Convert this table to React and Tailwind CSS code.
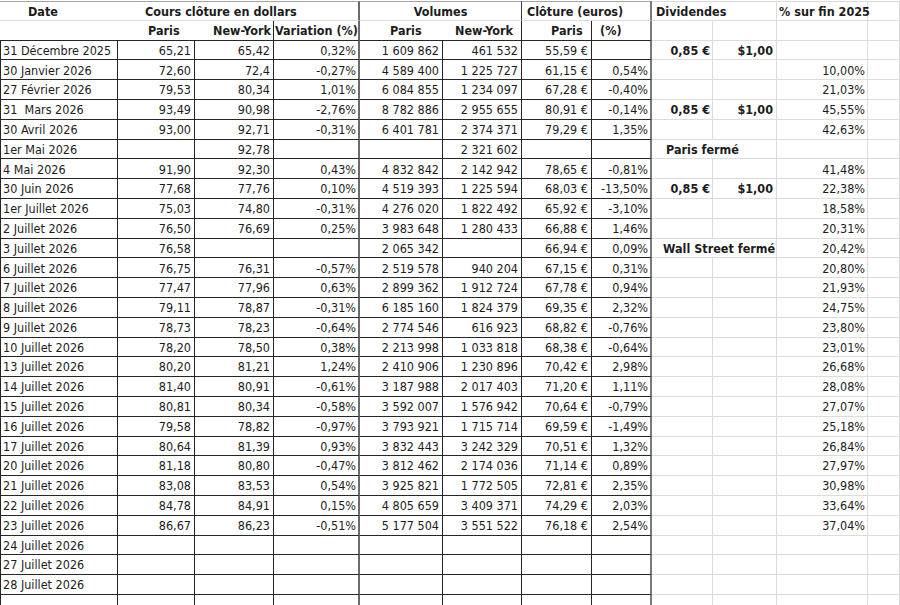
const cols =
  "grid grid-cols-[118px_77px_79px_86px_83px_79px_70px_60px_61px_64px_91px_32px]";

// border + alignment for each column of the data rows
const cellCls = [
  "border-l border-r border-b border-[#262626] justify-start pl-[2px]",
  "border-r border-b border-[#262626] justify-end pr-[3px]",
  "border-r border-b border-[#262626] justify-end pr-[3px]",
  "border-r-2 border-b border-b-[#262626] border-r-[#6b6b6b] justify-end pr-[2px]",
  "border-r border-b border-[#262626] justify-end pr-[3px]",
  "border-r border-b border-[#262626] justify-end pr-[3px]",
  "border-r border-b border-[#262626] justify-end pr-[3px]",
  "border-r-2 border-b border-b-[#262626] border-r-[#7a7a7a] justify-end pr-[2px]",
  "border-r border-b border-[#dcdcdc] justify-end pr-[2px] font-bold",
  "border-r border-b border-[#dcdcdc] justify-end pr-[3px] font-bold",
  "border-r border-b border-[#dcdcdc] justify-end pr-[2px]",
  "border-r border-b border-[#dcdcdc]",
];

const rows = [
  ["31 Décembre 2025", "65,21", "65,42", "0,32%", "1 609 862", "461 532", "55,59 €", "", "0,85 €", "$1,00", ""],
  ["30 Janvier 2026", "72,60", "72,4", "-0,27%", "4 589 400", "1 225 727", "61,15 €", "0,54%", "", "", "10,00%"],
  ["27 Février 2026", "79,53", "80,34", "1,01%", "6 084 855", "1 234 097", "67,28 €", "-0,40%", "", "", "21,03%"],
  ["31  Mars 2026", "93,49", "90,98", "-2,76%", "8 782 886", "2 955 655", "80,91 €", "-0,14%", "0,85 €", "$1,00", "45,55%"],
  ["30 Avril 2026", "93,00", "92,71", "-0,31%", "6 401 781", "2 374 371", "79,29 €", "1,35%", "", "", "42,63%"],
  ["1er Mai 2026", "", "92,78", "", "", "2 321 602", "", "", "Paris fermé", null, ""],
  ["4 Mai 2026", "91,90", "92,30", "0,43%", "4 832 842", "2 142 942", "78,65 €", "-0,81%", "", "", "41,48%"],
  ["30 Juin 2026", "77,68", "77,76", "0,10%", "4 519 393", "1 225 594", "68,03 €", "-13,50%", "0,85 €", "$1,00", "22,38%"],
  ["1er Juillet 2026", "75,03", "74,80", "-0,31%", "4 276 020", "1 822 492", "65,92 €", "-3,10%", "", "", "18,58%"],
  ["2 Juillet 2026", "76,50", "76,69", "0,25%", "3 983 648", "1 280 433", "66,88 €", "1,46%", "", "", "20,31%"],
  ["3 Juillet 2026", "76,58", "", "", "2 065 342", "", "66,94 €", "0,09%", "Wall Street fermé", null, "20,42%"],
  ["6 Juillet 2026", "76,75", "76,31", "-0,57%", "2 519 578", "940 204", "67,15 €", "0,31%", "", "", "20,80%"],
  ["7 Juillet 2026", "77,47", "77,96", "0,63%", "2 899 362", "1 912 724", "67,78 €", "0,94%", "", "", "21,93%"],
  ["8 Juillet 2026", "79,11", "78,87", "-0,31%", "6 185 160", "1 824 379", "69,35 €", "2,32%", "", "", "24,75%"],
  ["9 Juillet 2026", "78,73", "78,23", "-0,64%", "2 774 546", "616 923", "68,82 €", "-0,76%", "", "", "23,80%"],
  ["10 Juillet 2026", "78,20", "78,50", "0,38%", "2 213 998", "1 033 818", "68,38 €", "-0,64%", "", "", "23,01%"],
  ["13 Juillet 2026", "80,20", "81,21", "1,24%", "2 410 906", "1 230 896", "70,42 €", "2,98%", "", "", "26,68%"],
  ["14 Juillet 2026", "81,40", "80,91", "-0,61%", "3 187 988", "2 017 403", "71,20 €", "1,11%", "", "", "28,08%"],
  ["15 Juillet 2026", "80,81", "80,34", "-0,58%", "3 592 007", "1 576 942", "70,64 €", "-0,79%", "", "", "27,07%"],
  ["16 Juillet 2026", "79,58", "78,82", "-0,97%", "3 793 921", "1 715 714", "69,59 €", "-1,49%", "", "", "25,18%"],
  ["17 Juillet 2026", "80,64", "81,39", "0,93%", "3 832 443", "3 242 329", "70,51 €", "1,32%", "", "", "26,84%"],
  ["20 Juillet 2026", "81,18", "80,80", "-0,47%", "3 812 462", "2 174 036", "71,14 €", "0,89%", "", "", "27,97%"],
  ["21 Juillet 2026", "83,08", "83,53", "0,54%", "3 925 821", "1 772 505", "72,81 €", "2,35%", "", "", "30,98%"],
  ["22 Juillet 2026", "84,78", "84,91", "0,15%", "4 805 659", "3 409 371", "74,29 €", "2,03%", "", "", "33,64%"],
  ["23 Juillet 2026", "86,67", "86,23", "-0,51%", "5 177 504", "3 551 522", "76,18 €", "2,54%", "", "", "37,04%"],
  ["24 Juillet 2026", "", "", "", "", "", "", "", "", "", ""],
  ["27 Juillet 2026", "", "", "", "", "", "", "", "", "", ""],
  ["28 Juillet 2026", "", "", "", "", "", "", "", "", "", ""],
  ["", "", "", "", "", "", "", "", "", "", ""],
];

const Row = ({ data }) => (
  <div className={`${cols} h-[19.8px]`}>
    {[...data, ""].map((v, i) => {
      if (v === null) return null;
      // closed-market notes spill over the next column
      if (i === 8 && data[9] === null) {
        return (
          <div
            key={i}
            className={`col-span-2 flex items-center pt-[2px] whitespace-nowrap font-bold border-r border-b border-[#dcdcdc] ${
              v === "Paris fermé" ? "pl-[14px]" : "pl-[11px]"
            }`}
          >
            {v}
          </div>
        );
      }
      return (
        <div key={i} className={`flex items-center pt-[2px] whitespace-pre overflow-visible ${cellCls[i]}`}>
          {v}
        </div>
      );
    })}
  </div>
);

export default function App() {
  return (
    <div className="w-[900px] h-[605px] overflow-hidden bg-white pt-[1px] text-[12.5px] leading-none text-[#1c1c1c] font-['Liberation_Sans_Narrow','DejaVu_Sans_Condensed','Roboto_Condensed',Roboto,sans-serif]">
      {/* group headings */}
      <div className={`${cols} h-[19.8px] font-bold [&>div]:pt-[2px]`}>
        <div className="flex items-center pl-[28px] border-t border-b border-t-[#a3a3a3] border-b-[#dcdcdc]">Date</div>
        <div className="col-span-3 flex items-center pl-[27px] border-t border-b border-r-2 border-t-[#a3a3a3] border-b-[#dcdcdc] border-r-[#6b6b6b]">
          Cours clôture en dollars
        </div>
        <div className="col-span-2 flex items-center justify-center border-t border-b border-r border-t-[#a3a3a3] border-b-[#dcdcdc] border-r-[#3a3a3a]">
          Volumes
        </div>
        <div className="col-span-2 flex items-center pl-[5px] border-t border-b border-r-2 border-t-[#a3a3a3] border-b-[#dcdcdc] border-r-[#7a7a7a]">
          Clôture (euros)
        </div>
        <div className="col-span-2 flex items-center pl-[4px] border-t border-b border-r border-[#dcdcdc]">Dividendes</div>
        <div className="flex items-center pl-[2px] whitespace-nowrap border-t border-b border-r border-[#dcdcdc]">% sur fin 2025</div>
        <div className="border-t border-b border-r border-[#dcdcdc]" />
      </div>

      {/* sub headings */}
      <div className={`${cols} h-[19.8px] font-bold [&>div]:pt-[3px]`}>
        <div className="border-b border-[#262626]" />
        <div className="flex items-center pl-[30px] border-b border-[#262626]">Paris</div>
        <div className="flex items-center justify-end pr-[2px] border-b border-r border-[#262626]">New-York</div>
        <div className="flex items-center pl-[1px] whitespace-nowrap border-b border-r-2 border-b-[#262626] border-r-[#6b6b6b]">
          Variation (%)
        </div>
        <div className="flex items-center pl-[30px] border-b border-[#262626]">Paris</div>
        <div className="flex items-center pl-[12px] border-b border-r border-[#262626]">New-York</div>
        <div className="flex items-center pl-[29px] border-b border-r border-[#262626]">Paris</div>
        <div className="flex items-center pl-[8px] border-b border-r-2 border-b-[#262626] border-r-[#7a7a7a]">(%)</div>
        <div className="border-b border-r border-[#dcdcdc]" />
        <div className="border-b border-r border-[#dcdcdc]" />
        <div className="border-b border-r border-[#dcdcdc]" />
        <div className="border-b border-r border-[#dcdcdc]" />
      </div>

      {rows.map((r, i) => (
        <Row key={i} data={r} />
      ))}
    </div>
  );
}
